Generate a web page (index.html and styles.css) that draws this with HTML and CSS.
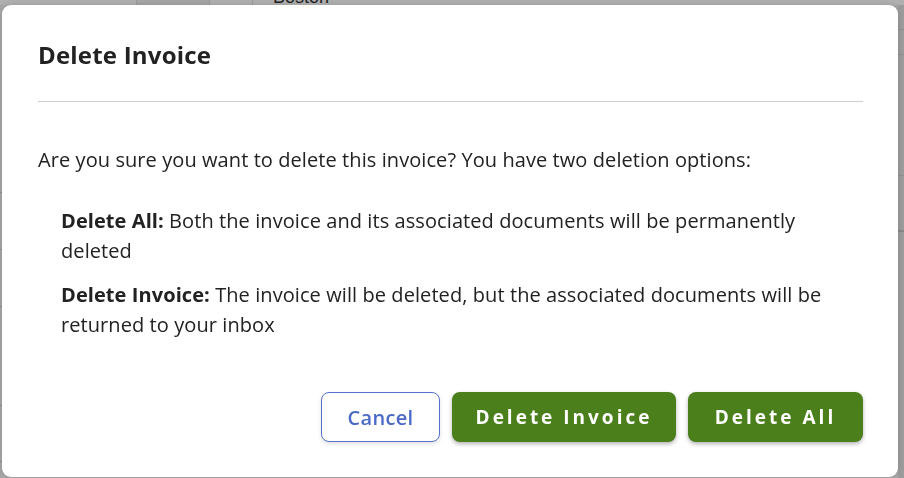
FILE: index.html
```html
<!DOCTYPE html>
<html lang="en">
<head>
<meta charset="utf-8">
<title>Delete Invoice</title>
<link rel="stylesheet" href="styles.css">
</head>
<body>
<div class="backdrop">
  <div class="bg-top">
    <div class="bg-cell w137"></div>
    <div class="bg-cell w73 dark"></div>
    <div class="bg-cell w43"></div>
    <div class="bg-cell grow"><span class="bg-text">Boston</span></div>
  </div>
  <div class="bg-body">
    <div class="bg-col left">
      <div class="bg-row" style="height:188px"></div>
      <div class="bg-row" style="height:57px"></div>
      <div class="bg-row" style="height:57px"></div>
      <div class="bg-row" style="height:99px"></div>
      <div class="bg-row" style="height:56px"></div>
    </div>
    <div class="bg-col mid"></div>
    <div class="bg-col right">
      <div class="bg-row" style="height:25px"></div>
      <div class="bg-row" style="height:25px"></div>
      <div class="bg-row" style="height:121px"></div>
      <div class="bg-row thick" style="height:56px"></div>
    </div>
  </div>
</div>

<div class="modal" role="dialog" aria-labelledby="dlg-title">
  <h2 id="dlg-title" class="modal-title">Delete Invoice</h2>
  <hr class="modal-divider">
  <p class="modal-intro">Are you sure you want to delete this invoice? You have two deletion options:</p>
  <div class="options">
    <p class="option"><strong>Delete All:</strong> Both the invoice and its associated documents will be permanently deleted</p>
    <p class="option"><strong>Delete Invoice:</strong> The invoice will be deleted, but the associated documents will be returned to your inbox</p>
  </div>
  <div class="actions">
    <button class="btn btn-cancel">Cancel</button>
    <button class="btn btn-primary btn-invoice">Delete Invoice</button>
    <button class="btn btn-primary btn-all">Delete All</button>
  </div>
</div>
</body>
</html>
```

FILE: styles.css
```css
* { box-sizing: border-box; }
html, body { margin: 0; padding: 0; }
body {
  width: 904px;
  height: 478px;
  overflow: hidden;
  background: #a9a9a9;
  font-family: "Open Sans", "Noto Sans", "Liberation Sans", sans-serif;
  color: #222;
}

/* faux background page under the overlay */
.backdrop { height: 478px; display: flex; flex-direction: column; }
.bg-top { display: flex; height: 5px; background: #b0b0b0; }
.bg-cell { border-right: 1px solid #9a9a9a; height: 5px; overflow: visible; }
.bg-cell.w137 { width: 137px; }
.bg-cell.w73 { width: 73px; background: #a6a6a6; }
.bg-cell.w43 { width: 43px; }
.bg-cell.grow { flex: 1; border-right: 0; padding-left: 20px; }
.bg-text { display: block; font-family: "Liberation Sans", Arial, sans-serif; font-size: 18px; line-height: 18px; margin-top: -12px; color: #222; }
.bg-body { flex: 1; display: flex; }
.bg-col.left { width: 2px; background: #a7a7a7; }
.bg-col.mid { flex: 1; }
.bg-col.right { width: 6px; background: #9c9c9c; }
.bg-row { border-bottom: 1px solid #8e8e8e; }
.bg-row.thick { border-bottom: 2px solid #888; }

/* modal overlay */
.modal {
  position: fixed;
  left: 2px;
  top: 5px;
  width: 896px;
  height: 472px;
  background: #fff;
  border-radius: 9px;
  padding: 34px 35px 0 36px;
  box-shadow: 0 0 6px rgba(0,0,0,0.15);
}
.modal-title {
  margin: 0;
  font-size: 24px;
  line-height: 32px;
  font-weight: 700;
  letter-spacing: 0.2px;
  color: #222;
}
.modal-divider {
  margin: 30px 0 0 0;
  border: 0;
  border-top: 1px solid #cfcfcf;
  height: 0;
}
.modal-intro {
  margin: 43px 0 0 0;
  font-size: 20px;
  line-height: 30px;
  letter-spacing: 0.08px;
  color: #222;
}
.options { padding: 0 0 0 23px; margin-top: 31px; display: flex; flex-direction: column; gap: 14px; }
.option { margin: 0; font-size: 20px; line-height: 30px; letter-spacing: 0.08px; color: #222; }
.option strong { font-weight: 700; }

.actions {
  display: flex;
  justify-content: flex-end;
  gap: 12px;
  margin-top: 52px;
}
.btn {
  height: 50px;
  border-radius: 8px;
  font-family: inherit;
  font-size: 19px;
  font-weight: 700;
  cursor: pointer;
}
.btn-cancel {
  width: 119px;
  background: #fff;
  border: 1px solid #5472cc;
  color: #4b69c6;
  font-size: 20px;
  font-weight: 600;
  letter-spacing: 0.3px;
  box-shadow: 0 2px 4px rgba(0,0,0,0.12);
}
.btn-primary {
  background: #4a7f1b;
  border: 0;
  color: #fff;
  letter-spacing: 3px;
  box-shadow: 0 2px 4px rgba(0,0,0,0.3);
}
.btn-invoice { width: 224px; }
.btn-all { width: 175px; }
```
